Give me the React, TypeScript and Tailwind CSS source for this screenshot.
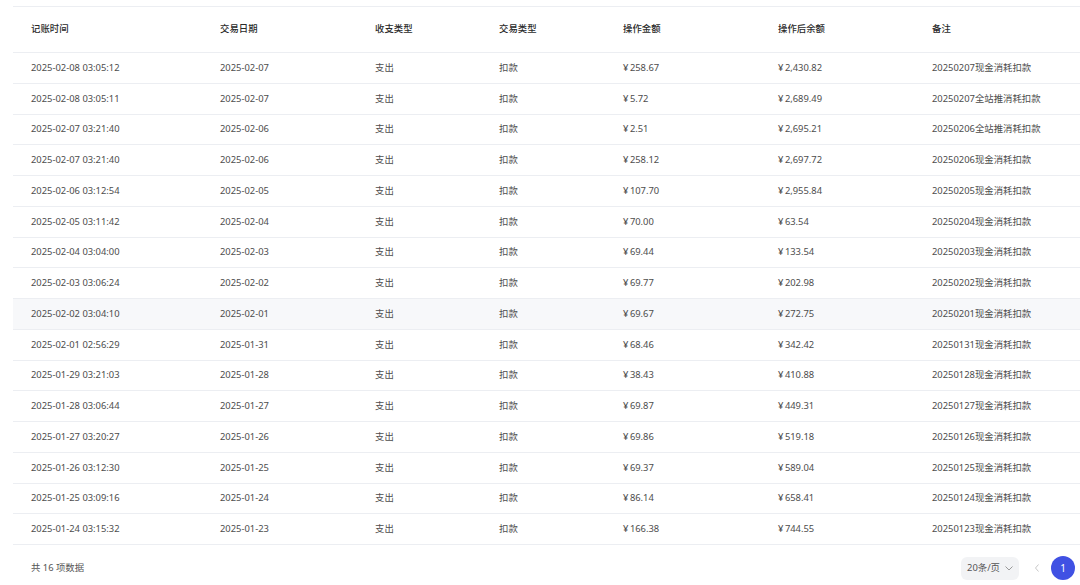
import React from "react";

const rows: string[][] = [
  ["2025-02-08 03:05:12", "2025-02-07", "¥258.67", "¥2,430.82", "20250207现金消耗扣款"],
  ["2025-02-08 03:05:11", "2025-02-07", "¥5.72", "¥2,689.49", "20250207全站推消耗扣款"],
  ["2025-02-07 03:21:40", "2025-02-06", "¥2.51", "¥2,695.21", "20250206全站推消耗扣款"],
  ["2025-02-07 03:21:40", "2025-02-06", "¥258.12", "¥2,697.72", "20250206现金消耗扣款"],
  ["2025-02-06 03:12:54", "2025-02-05", "¥107.70", "¥2,955.84", "20250205现金消耗扣款"],
  ["2025-02-05 03:11:42", "2025-02-04", "¥70.00", "¥63.54", "20250204现金消耗扣款"],
  ["2025-02-04 03:04:00", "2025-02-03", "¥69.44", "¥133.54", "20250203现金消耗扣款"],
  ["2025-02-03 03:06:24", "2025-02-02", "¥69.77", "¥202.98", "20250202现金消耗扣款"],
  ["2025-02-02 03:04:10", "2025-02-01", "¥69.67", "¥272.75", "20250201现金消耗扣款"],
  ["2025-02-01 02:56:29", "2025-01-31", "¥68.46", "¥342.42", "20250131现金消耗扣款"],
  ["2025-01-29 03:21:03", "2025-01-28", "¥38.43", "¥410.88", "20250128现金消耗扣款"],
  ["2025-01-28 03:06:44", "2025-01-27", "¥69.87", "¥449.31", "20250127现金消耗扣款"],
  ["2025-01-27 03:20:27", "2025-01-26", "¥69.86", "¥519.18", "20250126现金消耗扣款"],
  ["2025-01-26 03:12:30", "2025-01-25", "¥69.37", "¥589.04", "20250125现金消耗扣款"],
  ["2025-01-25 03:09:16", "2025-01-24", "¥86.14", "¥658.41", "20250124现金消耗扣款"],
  ["2025-01-24 03:15:32", "2025-01-23", "¥166.38", "¥744.55", "20250123现金消耗扣款"],
];

const headers = ["记账时间", "交易日期", "收支类型", "交易类型", "操作金额", "操作后余额", "备注"];
const widths = ["w-[189px]", "w-[155px]", "w-[124px]", "w-[124px]", "w-[155px]", "w-[154px]", "flex-1"];

function Money({ v }: { v: string }) {
  return (
    <span>
      ¥<span className="ml-[1.5px]">{v.slice(1)}</span>
    </span>
  );
}

export default function App() {
  return (
    <div
      className="w-[1080px] h-[585px] bg-white overflow-hidden text-[9.4px] text-[#4d4d4d]"
      style={{ fontFamily: '"Noto Sans", "Noto Sans CJK SC", sans-serif' }}
    >
      <div className="pt-[6px] pl-[13px]">
        <div className="border-t border-[#eceef2]">
          <div className="flex h-[46px] items-center border-b border-[#eceef2] font-medium text-[#2b2b2b]">
            {headers.map((h, i) => (
              <div key={h} className={`${widths[i]} pl-[18px] shrink-0`}>
                {h}
              </div>
            ))}
          </div>
          {rows.map((r, idx) => {
            const cells: React.ReactNode[] = [
              r[0],
              r[1],
              "支出",
              "扣款",
              <Money v={r[2]} />,
              <Money v={r[3]} />,
              r[4],
            ];
            return (
              <div
                key={idx}
                className={`flex h-[30.75px] items-center border-b border-[#eceef2] ${
                  idx === 8 ? "bg-[#f7f8fa]" : ""
                }`}
              >
                {cells.map((c, i) => (
                  <div key={i} className={`${widths[i]} pl-[18px] shrink-0 whitespace-nowrap`}>
                    {c}
                  </div>
                ))}
              </div>
            );
          })}
        </div>
        <div className="flex items-center justify-between h-[46px] pr-[5px]">
          <div className="pl-[18px] text-[#555]">共 16 项数据</div>
          <div className="flex items-center">
            <div className="flex items-center gap-[4px] h-[23px] pl-[6px] pr-[5px] rounded-[6px] bg-[#f2f3f5] text-[#555]">
              <span>20条/页</span>
              <svg width="10" height="10" viewBox="0 0 10 10" fill="none">
                <path d="M1.5 3.5 L5 7 L8.5 3.5" stroke="#999" strokeWidth="1" />
              </svg>
            </div>
            <div className="ml-[13px] w-[10px] flex justify-center">
              <svg width="8" height="10" viewBox="0 0 8 10" fill="none">
                <path d="M5.5 1.5 L2.5 5 L5.5 8.5" stroke="#c8c8c8" strokeWidth="1" />
              </svg>
            </div>
            <div className="ml-[9px] w-[24px] h-[24px] rounded-full bg-[#4051e3] text-white flex items-center justify-center text-[10px]">
              1
            </div>
          </div>
        </div>
      </div>
    </div>
  );
}
